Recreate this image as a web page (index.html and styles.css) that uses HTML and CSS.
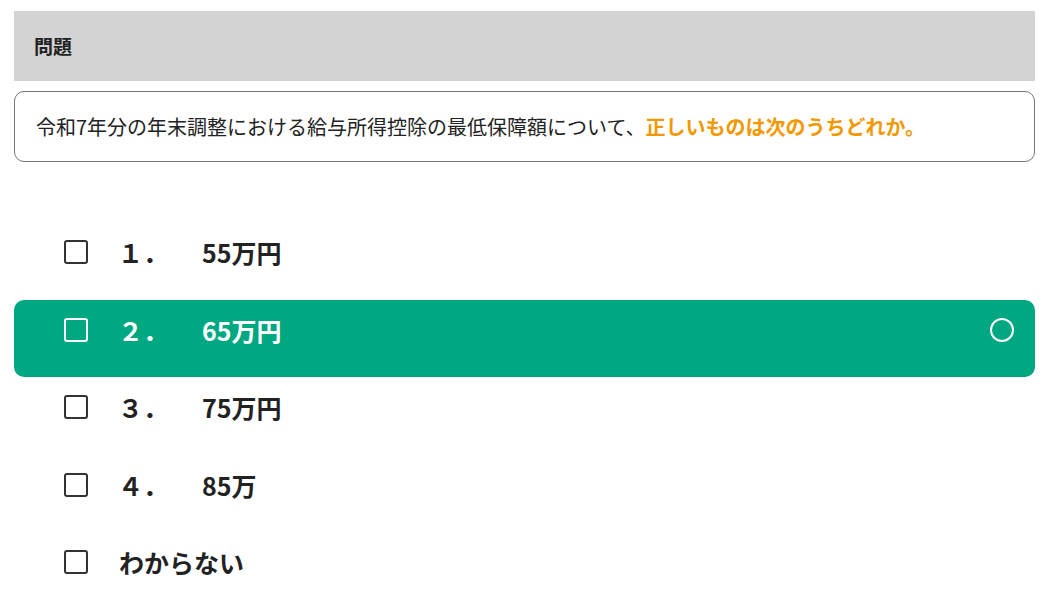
FILE: index.html
```html
<!DOCTYPE html>
<html lang="ja">
<head>
    <meta charset="UTF-8">
    <title>問題</title>
    <meta name="viewport" content="width=device-width, initial-scale=1">
    <link rel="stylesheet" href="styles.css">
</head>
<body>
    <div class="container">
        <div class="question-head">問題</div>
        <div class="question-box">
            令和7年分の年末調整における給与所得控除の最低保障額について、<span class="question-key">正しいものは次のうちどれか。</span>
        </div>
        <ul class="choice-list">
            <li class="choice">
                <span class="check"></span>
                <span class="choice-no">１．</span>
                <span class="choice-text">55万円</span>
            </li>
            <li class="choice choice-correct">
                <span class="check"></span>
                <span class="choice-no">２．</span>
                <span class="choice-text">65万円</span>
                <span class="mark-correct"></span>
            </li>
            <li class="choice">
                <span class="check"></span>
                <span class="choice-no">３．</span>
                <span class="choice-text">75万円</span>
            </li>
            <li class="choice">
                <span class="check"></span>
                <span class="choice-no">４．</span>
                <span class="choice-text">85万</span>
            </li>
            <li class="choice">
                <span class="check"></span>
                <span class="choice-text choice-unknown">わからない</span>
            </li>
        </ul>
    </div>
</body>
</html>
```

FILE: styles.css
```css
body {
    font-family: "Noto Sans CJK JP", "Noto Sans", sans-serif;
    color: #222;
    margin: 0;
    padding: 11px 20px 0 14px;
}
.container {
    width: 1021px;
}
.question-head {
    background: #d3d3d3;
    height: 70px;
    line-height: 70px;
    padding-left: 20px;
    font-size: 19px;
    font-weight: bold;
}
.question-box {
    margin-top: 10px;
    height: 71px;
    box-sizing: border-box;
    border: 1px solid #777;
    border-radius: 10px;
    padding: 0 21px;
    line-height: 69px;
    font-size: 20px;
}
.question-key {
    color: #f39800;
    font-weight: bold;
}
.choice-list {
    list-style: none;
    margin: 60px 0 0;
    padding: 0;
}
.choice {
    display: flex;
    align-items: center;
    height: 32px;
    padding: 14px 21px 31px 50px;
    margin-bottom: 0.5px;
    border-radius: 10px;
    font-size: 25px;
    font-weight: bold;
}
.choice-correct {
    background: #00a881;
    color: #fff;
}
.check {
    width: 24px;
    height: 24px;
    box-sizing: border-box;
    border: 2px solid #333;
    border-radius: 3px;
    background: #fff;
    flex: none;
}
.choice-correct .check {
    border-color: #fff;
    background: transparent;
}
.choice-no {
    width: 84px;
    margin-left: 30px;
    flex: none;
}
.choice-text {
    flex: 1;
}
.choice-unknown {
    margin-left: 31px;
}
.mark-correct {
    width: 24px;
    height: 24px;
    box-sizing: border-box;
    border: 2px solid #fff;
    border-radius: 50%;
    flex: none;
}
```
